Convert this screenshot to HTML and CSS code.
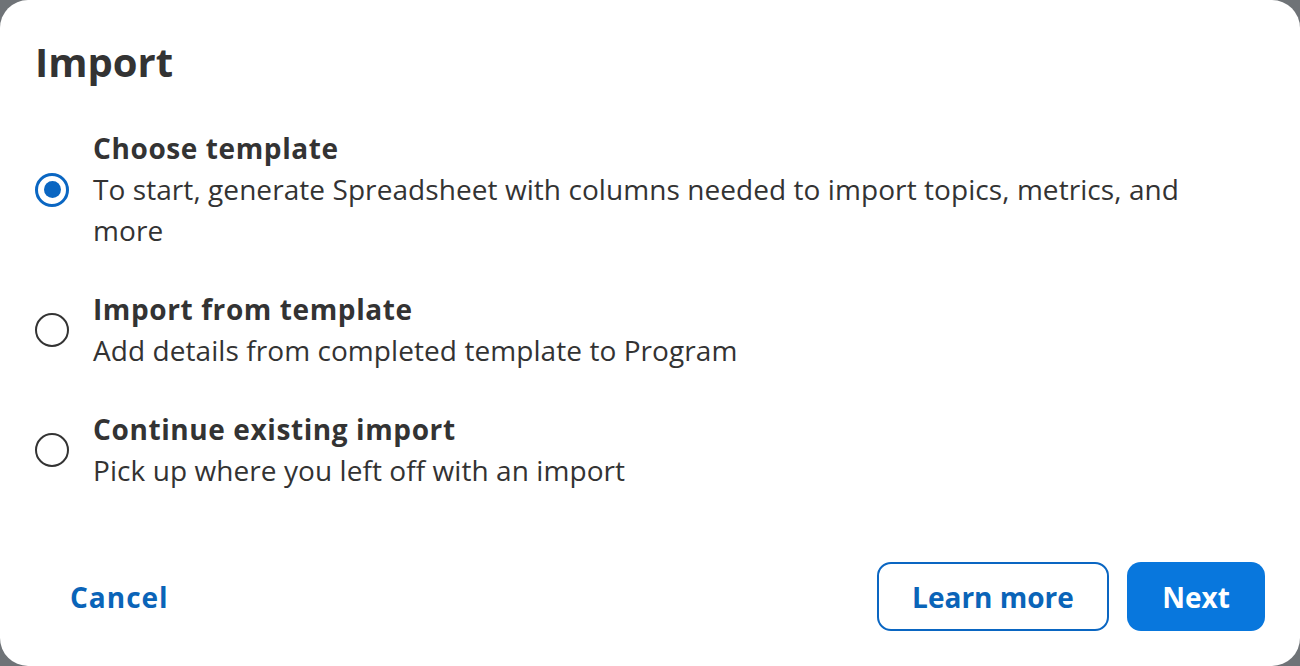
FILE: index.html
```html
<!DOCTYPE html>
<html lang="en">
<head>
<meta charset="utf-8">
<title>Import</title>
<link rel="stylesheet" href="styles.css">
</head>
<body>
<div class="modal">
  <h1 class="title">Import</h1>
  <div class="options">
    <label class="option">
      <span class="radio checked"><span class="dot"></span></span>
      <span class="text">
        <span class="heading">Choose template</span>
        <span class="desc">To start, generate Spreadsheet with columns needed to import topics, metrics, and more</span>
      </span>
    </label>
    <label class="option">
      <span class="radio"></span>
      <span class="text">
        <span class="heading">Import from template</span>
        <span class="desc">Add details from completed template to Program</span>
      </span>
    </label>
    <label class="option">
      <span class="radio"></span>
      <span class="text">
        <span class="heading">Continue existing import</span>
        <span class="desc">Pick up where you left off with an import</span>
      </span>
    </label>
  </div>
  <div class="footer">
    <button class="btn btn-link">Cancel</button>
    <div class="actions">
      <button class="btn btn-outline">Learn more</button>
      <button class="btn btn-primary">Next</button>
    </div>
  </div>
</div>
</body>
</html>
```
FILE: styles.css
```css
html, body {
  margin: 0;
  padding: 0;
  height: 100%;
}
body {
  background: #6f7377;
  font-family: "Open Sans", "Liberation Sans", sans-serif;
  color: #333;
}
.modal {
  box-sizing: border-box;
  width: 1300px;
  height: 666px;
  background: #fff;
  border-radius: 28px;
  padding: 34px 35px 35px 35px;
  display: flex;
  flex-direction: column;
}
.title {
  margin: 0;
  font-size: 40px;
  line-height: 56px;
  font-weight: 700;
  color: #333;
}
.options {
  margin-top: 38px;
  display: flex;
  flex-direction: column;
  gap: 38px;
}
.option {
  display: flex;
  align-items: center;
  gap: 24px;
}
.radio {
  flex: none;
  box-sizing: border-box;
  width: 34px;
  height: 34px;
  border-radius: 50%;
  border: 2.5px solid #333;
  display: flex;
  align-items: center;
  justify-content: center;
}
.radio.checked {
  border: 3px solid #0a66c2;
}
.dot {
  width: 17px;
  height: 17px;
  border-radius: 50%;
  background: #0a66c2;
}
.text {
  display: flex;
  flex-direction: column;
  max-width: 1120px;
}
.heading {
  font-size: 28px;
  line-height: 41px;
  font-weight: 700;
  letter-spacing: 0.6px;
}
.desc {
  font-size: 28px;
  line-height: 41px;
  letter-spacing: 0.07px;
}
.footer {
  margin-top: auto;
  display: flex;
  align-items: center;
  justify-content: space-between;
}
.actions {
  display: flex;
  gap: 18px;
}
.btn {
  font-family: inherit;
  font-size: 28px;
  font-weight: 700;
  height: 69px;
  border-radius: 14px;
  cursor: pointer;
  box-sizing: border-box;
}
.btn-link {
  background: none;
  border: none;
  color: #0a64b8;
  padding: 0 35px;
  letter-spacing: 1px;
}
.btn-outline {
  width: 232px;
  background: #fff;
  border: 2px solid #0a66c2;
  color: #0a64b8;
}
.btn-primary {
  width: 138px;
  background: #0877dd;
  border: none;
  color: #fff;
}
```
